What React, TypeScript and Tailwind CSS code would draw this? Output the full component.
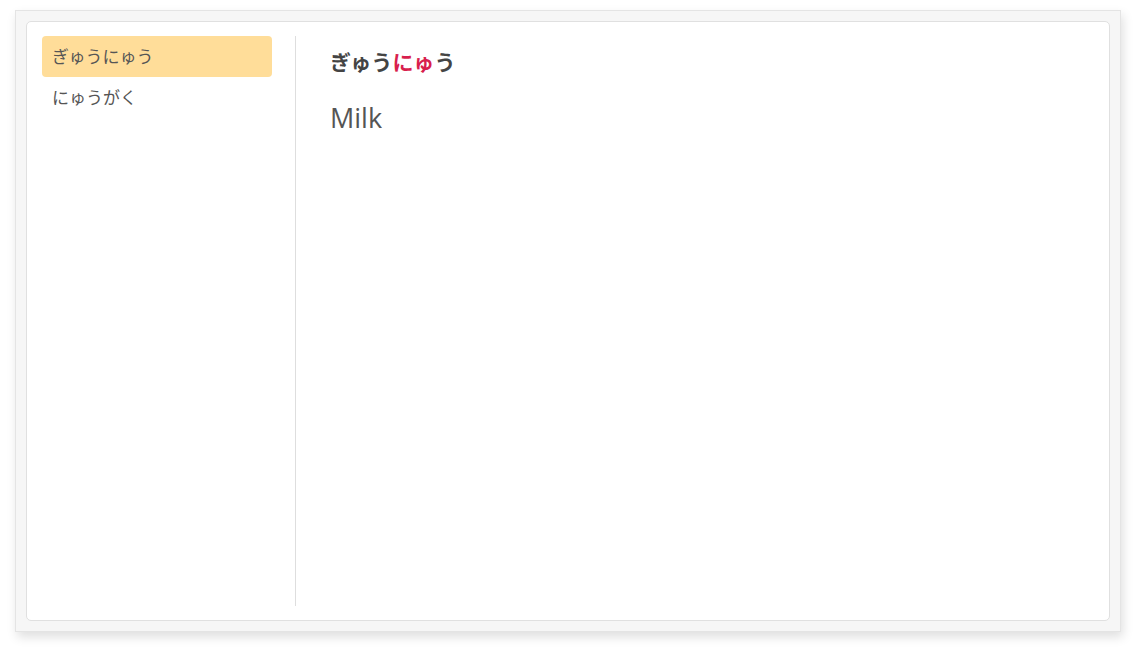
import { useState } from 'react';

const words = [
  { kana: 'ぎゅうにゅう', meaning: 'Milk', hl: [3, 5] },
  { kana: 'にゅうがく', meaning: 'Admission', hl: [0, 2] },
];

export default function App() {
  const [selected, setSelected] = useState(0);
  const word = words[selected];
  const [a, b] = word.hl;

  return (
    <div className="min-h-screen bg-white pt-[10px] pl-[15px] pr-[15px] font-['Open_Sans','Noto_Sans_CJK_JP',sans-serif] text-[#555]">
      <div className="h-[622px] border border-[#e4e4e4] bg-[#f6f6f6] p-[10px] shadow-[2px_5px_10px_rgba(0,0,0,0.13)]">
        <div className="flex h-full rounded-[5px] border border-[#e0e0e0] bg-white px-[15px] py-[14px]">
          {/* Word list */}
          <div className="w-[254px] shrink-0 border-r border-[#dedede] pr-[23px]">
            {words.map((w, i) => (
              <button
                key={w.kana}
                type="button"
                onClick={() => setSelected(i)}
                className={`block h-[41px] w-full rounded-[4px] px-[10px] pb-[2px] text-left text-[17px] leading-[39px] font-['Noto_Sans_CJK_JP',sans-serif] ${
                  i === selected ? 'bg-[#ffdd99]' : 'bg-transparent'
                }`}
              >
                {w.kana}
              </button>
            ))}
          </div>

          {/* Detail */}
          <div className="flex-1 pl-[34px]">
            <h1 className="mt-[7px] text-[21px] leading-[36px] font-bold text-[#444] font-['Noto_Sans_CJK_JP',sans-serif]">
              {word.kana.slice(0, a)}
              <span className="text-[#d81f4e]">{word.kana.slice(a, b)}</span>
              {word.kana.slice(b)}
            </h1>
            <p className="mt-[21px] text-[27px] leading-[36px] text-[#555]">{word.meaning}</p>
          </div>
        </div>
      </div>
    </div>
  );
}
